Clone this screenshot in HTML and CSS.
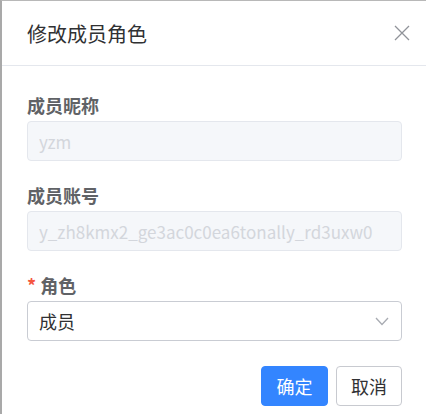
FILE: index.html
```html
<!DOCTYPE html>
<html lang="zh-CN">

<head>
  <meta charset="UTF-8">
  <meta name="viewport" content="width=device-width, initial-scale=1.0">
  <title>修改成员角色</title>
  <link rel="stylesheet" href="styles.css">
</head>

<body>
  <div class="dialog">
    <div class="dialog-header">
      <span class="dialog-title">修改成员角色</span>
      <span class="close-button">
        <svg width="16" height="16" viewBox="0 0 16 16">
          <path d="M1 1 L15 15 M15 1 L1 15" stroke="#909399" stroke-width="1.3" fill="none" />
        </svg>
      </span>
    </div>

    <form class="dialog-body">
      <div class="form-group">
        <label>成员昵称</label>
        <input type="text" class="field" value="yzm" disabled>
      </div>
      <div class="form-group">
        <label>成员账号</label>
        <input type="text" class="field" value="y_zh8kmx2_ge3ac0c0ea6tonally_rd3uxw0" disabled>
      </div>
      <div class="form-group">
        <label><span class="required">*</span>角色</label>
        <div class="select">
          <span>成员</span>
          <svg width="14" height="9" viewBox="0 0 14 9">
            <path d="M1 1 L7 7.5 L13 1" stroke="#a8abb2" stroke-width="1.3" fill="none" />
          </svg>
        </div>
      </div>
      <div class="dialog-footer">
        <button type="button" class="btn btn-primary">确定</button>
        <button type="button" class="btn">取消</button>
      </div>
    </form>
  </div>
</body>

</html>
```

FILE: styles.css
```css
* {
  margin: 0;
  padding: 0;
  box-sizing: border-box;
  font-family: 'Noto Sans CJK SC', 'Noto Sans', sans-serif;
}

body {
  background-color: #ffffff;
  width: 426px;
  height: 414px;
  overflow: hidden;
}

.dialog {
  width: 426px;
  height: 414px;
  border-top: 1px solid #b8b8b8;
  border-left: 2px solid #a9a9a9;
  background-color: #ffffff;
}

.dialog-header {
  height: 65px;
  border-bottom: 1px solid #e4e7ed;
  display: flex;
  align-items: center;
  justify-content: space-between;
  padding: 0 16px 0 25px;
}

.dialog-title {
  font-size: 20px;
  color: #303133;
  line-height: 28px;
  margin-top: 2px;
}

.close-button {
  display: flex;
  margin-top: -1px;
  cursor: pointer;
}

.dialog-body {
  padding: 27px 24px 0 25px;
}

.form-group {
  margin-bottom: 22px;
}

label {
  display: block;
  font-size: 18px;
  line-height: 24px;
  font-weight: 700;
  color: #606266;
  margin-bottom: 4px;
}

.required {
  color: #f5563f;
  margin-right: 4px;
}

.field {
  width: 100%;
  height: 40px;
  padding: 0 11px;
  border: 1px solid #e4e7ed;
  border-radius: 4px;
  background-color: #f5f7fa;
  color: #d3d6dc;
  font-size: 17px;
}

.select {
  height: 40px;
  padding: 0 12px 0 11px;
  border: 1px solid #c9ccd3;
  border-radius: 4px;
  display: flex;
  align-items: center;
  justify-content: space-between;
  font-size: 18px;
  color: #303133;
}

.dialog-footer {
  display: flex;
  justify-content: flex-end;
  gap: 8px;
  margin-top: 25px;
}

.btn {
  height: 40px;
  padding: 0 14px;
  border: 1px solid #c8cad0;
  border-radius: 4px;
  background-color: #ffffff;
  color: #303133;
  font-size: 18px;
  cursor: pointer;
}

.btn-primary {
  width: 67px;
  border-color: #3385ff;
  background-color: #3385ff;
  color: #ffffff;
}
```
